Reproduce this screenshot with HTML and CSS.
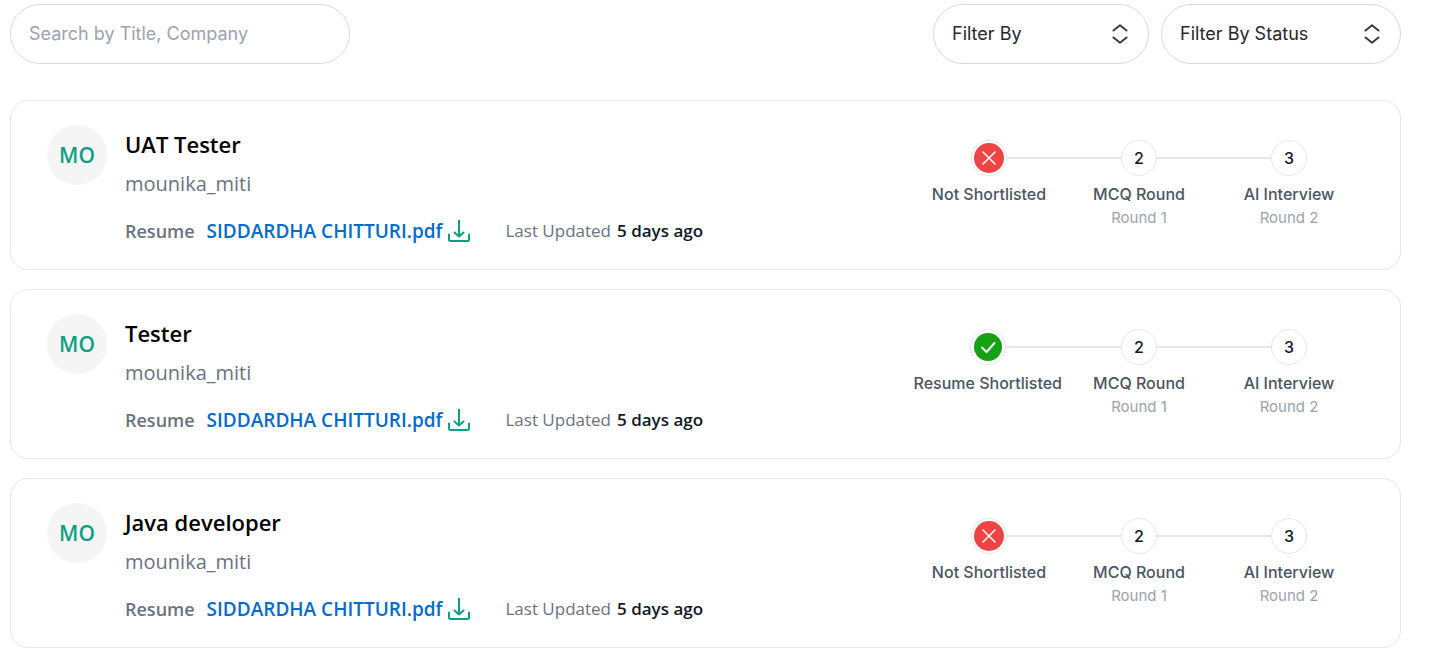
FILE: index.html
```html
<!DOCTYPE html>
<html lang="en">
<head>
<meta charset="utf-8">
<title>Applications</title>
<link rel="stylesheet" href="styles.css">
</head>
<body>
<svg class="sprite" aria-hidden="true">
  <symbol id="sort" viewBox="0 0 16 20"><path d="M1.5 6.5 8 1.2l6.500 5.300M1.500 13.500 8 18.800l6.500-5.300"/></symbol>
  <symbol id="download" viewBox="0 0 22 22"><path d="M11 .5v16M6.500 12.500 11 16.500l4.500-4M1 14.500v5q0 1.500 1.500 1.500h17q1.500 0 1.500-1.500v-5"/></symbol>
  <symbol id="cross" viewBox="0 0 30 30"><path d="m9 9 12 12M21 9 9 21"/></symbol>
  <symbol id="check" viewBox="0 0 28 28"><path d="m8 14.500 4.500 4.500L20.500 10"/></symbol>
</svg>
<main class="page">
  <form class="toolbar">
    <input class="search" type="text" placeholder="Search by Title, Company" aria-label="Search by title or company">
    <div class="filters">
      <div class="filter">
        <select class="filter-select" aria-label="Filter by"><option>Filter By</option></select>
        <svg class="filter-icon"><use href="#sort"/></svg>
      </div>
      <div class="filter filter-wide">
        <select class="filter-select" aria-label="Filter by status"><option>Filter By Status</option></select>
        <svg class="filter-icon"><use href="#sort"/></svg>
      </div>
    </div>
  </form>

  <article class="card">
    <div class="avatar">MO</div>
    <div class="info">
      <h2 class="title">UAT Tester</h2>
      <p class="company">mounika_miti</p>
      <div class="meta">
        <span class="resume">Resume</span>
        <a class="file" href="#">SIDDARDHA CHITTURI.pdf</a>
        <button class="download" type="button" aria-label="Download resume"><svg class="download-icon"><use href="#download"/></svg></button>
        <span class="updated">Last Updated <strong class="ago">5 days ago</strong></span>
      </div>
    </div>
    <ol class="steps">
      <li class="step"><div class="track"><span class="dot"><svg class="mark rejected"><use href="#cross"/></svg></span></div><span class="label">Not Shortlisted</span></li>
      <li class="step"><div class="track"><span class="dot">2</span></div><span class="label">MCQ Round</span><span class="round">Round 1</span></li>
      <li class="step"><div class="track"><span class="dot">3</span></div><span class="label">AI Interview</span><span class="round">Round 2</span></li>
    </ol>
  </article>

  <article class="card">
    <div class="avatar">MO</div>
    <div class="info">
      <h2 class="title">Tester</h2>
      <p class="company">mounika_miti</p>
      <div class="meta">
        <span class="resume">Resume</span>
        <a class="file" href="#">SIDDARDHA CHITTURI.pdf</a>
        <button class="download" type="button" aria-label="Download resume"><svg class="download-icon"><use href="#download"/></svg></button>
        <span class="updated">Last Updated <strong class="ago">5 days ago</strong></span>
      </div>
    </div>
    <ol class="steps">
      <li class="step"><div class="track"><span class="dot"><svg class="mark passed"><use href="#check"/></svg></span></div><span class="label">Resume Shortlisted</span></li>
      <li class="step"><div class="track"><span class="dot">2</span></div><span class="label">MCQ Round</span><span class="round">Round 1</span></li>
      <li class="step"><div class="track"><span class="dot">3</span></div><span class="label">AI Interview</span><span class="round">Round 2</span></li>
    </ol>
  </article>

  <article class="card">
    <div class="avatar">MO</div>
    <div class="info">
      <h2 class="title">Java developer</h2>
      <p class="company">mounika_miti</p>
      <div class="meta">
        <span class="resume">Resume</span>
        <a class="file" href="#">SIDDARDHA CHITTURI.pdf</a>
        <button class="download" type="button" aria-label="Download resume"><svg class="download-icon"><use href="#download"/></svg></button>
        <span class="updated">Last Updated <strong class="ago">5 days ago</strong></span>
      </div>
    </div>
    <ol class="steps">
      <li class="step"><div class="track"><span class="dot"><svg class="mark rejected"><use href="#cross"/></svg></span></div><span class="label">Not Shortlisted</span></li>
      <li class="step"><div class="track"><span class="dot">2</span></div><span class="label">MCQ Round</span><span class="round">Round 1</span></li>
      <li class="step"><div class="track"><span class="dot">3</span></div><span class="label">AI Interview</span><span class="round">Round 2</span></li>
    </ol>
  </article>
</main>
</body>
</html>
```
FILE: styles.css
```css
* { box-sizing: border-box; }
body { margin: 0; background: #fff; font-family: "Segoe UI", "Open Sans", sans-serif; color: #111827; }
.sprite { display: none; }
.page { display: flex; flex-direction: column; gap: 19px; padding: 4px 34px 10px 10px; }

.toolbar { display: flex; justify-content: space-between; margin-bottom: 17px; }
.search, .filter-select {
  height: 60px; padding: 0 18px 2px; border: 1px solid #d9d9d9; border-radius: 30px;
  background: #fff; font: 400 18px Inter, sans-serif; color: #27272a;
}
.search { width: 340px; }
.search::placeholder { color: #9ca3af; opacity: 1; }
.filters { display: flex; gap: 12px; }
.filter { display: grid; align-items: center; width: 216px; }
.filter-wide { width: 240px; }
.filter-select { grid-area: 1 / 1; width: 100%; appearance: none; }
.filter-icon {
  grid-area: 1 / 1; justify-self: end; width: 16px; height: 20px; margin-right: 21px; pointer-events: none;
  fill: none; stroke: #3f3a40; stroke-width: 2; stroke-linecap: round; stroke-linejoin: round;
}

.card { display: flex; align-items: flex-start; padding: 24px 36px; border: 1px solid #e5e7eb; border-radius: 18px; }
.avatar {
  display: grid; place-items: center; flex: none; width: 60px; height: 60px; margin-right: 18px;
  border-radius: 50%; background: #f5f5f5; color: #0d9f84; font-size: 21px; font-weight: 600;
}
.info { flex: 1; }
.title { margin: 0; font-size: 22px; line-height: 38px; font-weight: 600; color: #000; }
.company { margin: 0; font-size: 20px; line-height: 42px; color: #6b7280; }
.meta { display: flex; align-items: center; height: 40px; padding-top: 12px; line-height: 28px; white-space: nowrap; }
.resume { margin-right: 12px; font-size: 18px; font-weight: 600; color: #6b7280; }
.file { font-size: 19px; font-weight: 600; color: #056bc9; text-decoration: none; }
.download { display: grid; margin: 0 35px 0 6px; padding: 0; border: 0; background: none; }
.download-icon { width: 22px; height: 22px; fill: none; stroke: #0d9f84; stroke-width: 2; stroke-linecap: round; stroke-linejoin: round; }
.updated { display: flex; gap: 6px; font-size: 17px; color: #6b7280; }
.ago { font-weight: 600; color: #111827; }

.steps { display: flex; margin: 15px 0 0; padding: 0; list-style: none; font-family: Inter, sans-serif; }
.step { display: flex; flex-direction: column; align-items: center; min-width: 150px; }
.track { display: flex; align-items: center; align-self: stretch; }
.track::before, .track::after { content: ""; flex: 1; height: 2px; background: #e5e7eb; }
.step:first-child .track::before, .step:last-child .track::after { background: none; }
.dot { display: grid; place-items: center; width: 36px; height: 36px; border: 1px solid #e5e7eb; border-radius: 50%; font-size: 16px; font-weight: 500; }
.mark { border-radius: 50%; fill: none; stroke: #fff; stroke-linecap: round; stroke-linejoin: round; }
.rejected { width: 30px; height: 30px; background: #ef4444; stroke-width: 1.5; }
.passed { width: 28px; height: 28px; background: #16a016; stroke-width: 2; }
.label { margin-top: 6px; padding: 0 2px; font-size: 16px; line-height: 24px; font-weight: 500; color: #4b5563; }
.round { font-size: 15px; line-height: 24px; color: #9ca3af; }
```
